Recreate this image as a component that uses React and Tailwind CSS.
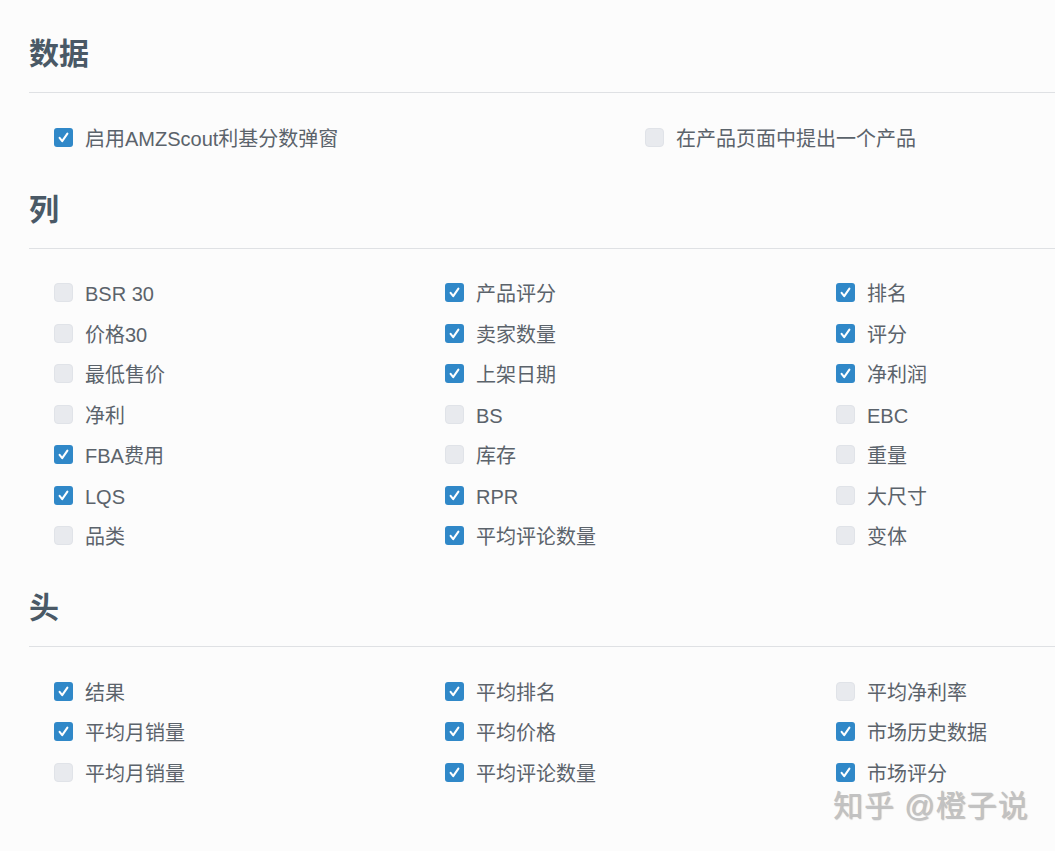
import React from 'react';

const sections = [
  {
    title: '数据',
    colWidth: 'w-[592px]',
    cols: [
      [{ label: '启用AMZScout利基分数弹窗', on: true }],
      [{ label: '在产品页面中提出一个产品', on: false }],
    ],
  },
  {
    title: '列',
    colWidth: 'w-[391px]',
    cols: [
      [
        { label: 'BSR 30', on: false },
        { label: '价格30', on: false },
        { label: '最低售价', on: false },
        { label: '净利', on: false },
        { label: 'FBA费用', on: true },
        { label: 'LQS', on: true },
        { label: '品类', on: false },
      ],
      [
        { label: '产品评分', on: true },
        { label: '卖家数量', on: true },
        { label: '上架日期', on: true },
        { label: 'BS', on: false },
        { label: '库存', on: false },
        { label: 'RPR', on: true },
        { label: '平均评论数量', on: true },
      ],
      [
        { label: '排名', on: true },
        { label: '评分', on: true },
        { label: '净利润', on: true },
        { label: 'EBC', on: false },
        { label: '重量', on: false },
        { label: '大尺寸', on: false },
        { label: '变体', on: false },
      ],
    ],
  },
  {
    title: '头',
    colWidth: 'w-[391px]',
    cols: [
      [
        { label: '结果', on: true },
        { label: '平均月销量', on: true },
        { label: '平均月销量', on: false },
      ],
      [
        { label: '平均排名', on: true },
        { label: '平均价格', on: true },
        { label: '平均评论数量', on: true },
      ],
      [
        { label: '平均净利率', on: false },
        { label: '市场历史数据', on: true },
        { label: '市场评分', on: true },
      ],
    ],
  },
];

const Box = ({ on }) =>
  on ? (
    <span className="w-[19px] h-[19px] rounded-[3px] bg-[#3088c8] flex items-center justify-center shrink-0">
      <svg width="13" height="13" viewBox="0 0 12 12" fill="none">
        <path d="M2.4 6.3 L4.8 9.3 L9.6 2.4" stroke="#fff" strokeWidth="1.9" strokeLinecap="round" strokeLinejoin="round" />
      </svg>
    </span>
  ) : (
    <span className="w-[19px] h-[19px] rounded-[4px] bg-[#e8eaee] border border-[#e0e3e8] shrink-0" />
  );

export default function App() {
  return (
    <div
      className="relative w-full min-h-[851px] overflow-hidden bg-[#fcfcfc]"
      style={{ fontFamily: '"Liberation Sans", "Noto Sans CJK SC", sans-serif' }}
    >
      <div className="w-[1230px] pl-[29px] pt-[34px]">
        {sections.map((s, si) => (
          <div key={s.title} className={si > 0 ? 'mt-[32px]' : ''}>
            <h2 className="text-[30px] leading-[40px] font-bold text-[#4a5966]">{s.title}</h2>
            <div className="mt-[18px] border-t border-[#dfe1e4]" />
            <div className="flex pl-[25px] pt-[24px]">
              {s.cols.map((col, ci) => (
                <div key={ci} className={ci === 0 && si === 0 ? 'w-[598px]' : s.colWidth}>
                  {col.map((item, ii) => (
                    <div key={ii} className="h-[40.5px] flex items-center gap-[12px]">
                      <Box on={item.on} />
                      <span className="text-[20px] leading-[24px] text-[#5b636b] mt-[3px]">{item.label}</span>
                    </div>
                  ))}
                </div>
              ))}
            </div>
          </div>
        ))}
      </div>
      <div
        className="absolute left-[833px] top-[786px] text-[30px] leading-[40px] text-[#c2c2c2] tracking-[1px]"
        style={{ textShadow: '1px 1px 1px rgba(0,0,0,0.25)' }}
      >
        知乎 @橙子说
      </div>
    </div>
  );
}
